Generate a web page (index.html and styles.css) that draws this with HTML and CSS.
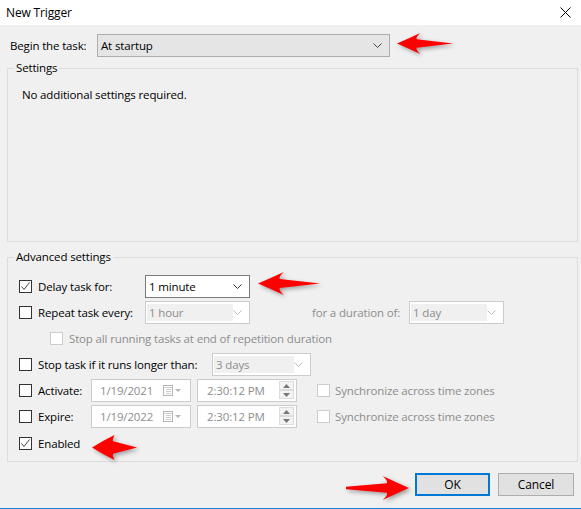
FILE: index.html
```html
<!DOCTYPE html>
<html lang="en">
<head>
    <meta charset="UTF-8">
    <title>New Trigger</title>
    <link rel="stylesheet" href="styles.css">
</head>
<body>

<div class="dialog">
    <div class="titlebar">
        <span class="title">New Trigger</span>
        <svg class="close" width="11" height="11" viewBox="0 0 11 11"><path d="M0.5 0.5L10.5 10.5M10.5 0.5L0.5 10.5" stroke="#000" stroke-width="1"/></svg>
    </div>

    <div class="content">
        <div class="begin-row">
            <span class="begin-label">Begin the task:</span>
            <div class="combo combo-begin">
                <span>At startup</span>
                <svg width="9" height="5" viewBox="0 0 9 5"><path d="M0.5 0.5L4.5 4.5L8.5 0.5" fill="none" stroke="#444"/></svg>
            </div>
        </div>

        <!-- Settings -->
        <fieldset class="group group-settings">
            <legend>Settings</legend>
            <p class="note">No additional settings required.</p>
        </fieldset>

        <!-- Advanced settings -->
        <fieldset class="group group-advanced">
            <legend>Advanced settings</legend>

            <div class="opt-row">
                <span class="check checked"><svg width="11" height="11" viewBox="0 0 11 11"><path d="M1.5 5.5L4 8.5L9.5 1.5" fill="none" stroke="#444" stroke-width="1"/></svg></span>
                <span class="opt-label w-delay">Delay task for:</span>
                <div class="combo combo-active w-105">
                    <span>1 minute</span>
                    <svg width="9" height="5" viewBox="0 0 9 5"><path d="M0.5 0.5L4.5 4.5L8.5 0.5" fill="none" stroke="#333"/></svg>
                </div>
            </div>

            <div class="opt-row">
                <span class="check"></span>
                <span class="opt-label w-delay">Repeat task every:</span>
                <div class="combo combo-off w-105">
                    <span class="combo-text w-84">1 hour</span>
                    <svg width="9" height="5" viewBox="0 0 9 5"><path d="M0.5 0.5L4.5 4.5L8.5 0.5" fill="none" stroke="#bbb"/></svg>
                </div>
                <span class="opt-label off duration-label">for a duration of:</span>
                <div class="combo combo-off w-95">
                    <span class="combo-text w-72">1 day</span>
                    <svg width="9" height="5" viewBox="0 0 9 5"><path d="M0.5 0.5L4.5 4.5L8.5 0.5" fill="none" stroke="#bbb"/></svg>
                </div>
            </div>

            <div class="opt-row">
                <span class="check check-off sub"></span>
                <span class="opt-label off">Stop all running tasks at end of repetition duration</span>
            </div>

            <div class="opt-row">
                <span class="check"></span>
                <span class="opt-label w-stop">Stop task if it runs longer than:</span>
                <div class="combo combo-off w-99">
                    <span class="combo-text w-78">3 days</span>
                    <svg width="9" height="5" viewBox="0 0 9 5"><path d="M0.5 0.5L4.5 4.5L8.5 0.5" fill="none" stroke="#bbb"/></svg>
                </div>
            </div>

            <div class="opt-row">
                <span class="check"></span>
                <span class="opt-label w-date">Activate:</span>
                <div class="field date-field">
                    <span>1/19/2021</span>
                    <span class="cal">
                        <svg width="19" height="11" viewBox="0 0 19 11"><rect x="0.5" y="0.5" width="9" height="10" fill="#fff" stroke="#b5b5b5"/><path d="M0.5 2.5H9.5M3 4.5H8M3 6.5H8M3 8.5H8" stroke="#cfcfcf"/><path d="M12 4H18L15 7Z" fill="#b5b5b5"/></svg>
                    </span>
                </div>
                <div class="field time-field">
                    <span>2:30:12 PM</span>
                    <span class="spin">
                        <span class="spin-btn"><svg width="7" height="4" viewBox="0 0 7 4"><path d="M0 4H7L3.5 0Z" fill="#777"/></svg></span>
                        <span class="spin-btn"><svg width="7" height="4" viewBox="0 0 7 4"><path d="M0 0H7L3.5 4Z" fill="#777"/></svg></span>
                    </span>
                </div>
                <span class="check check-off sync"></span>
                <span class="opt-label off">Synchronize across time zones</span>
            </div>

            <div class="opt-row">
                <span class="check"></span>
                <span class="opt-label w-date">Expire:</span>
                <div class="field date-field">
                    <span>1/19/2022</span>
                    <span class="cal">
                        <svg width="19" height="11" viewBox="0 0 19 11"><rect x="0.5" y="0.5" width="9" height="10" fill="#fff" stroke="#b5b5b5"/><path d="M0.5 2.5H9.5M3 4.5H8M3 6.5H8M3 8.5H8" stroke="#cfcfcf"/><path d="M12 4H18L15 7Z" fill="#b5b5b5"/></svg>
                    </span>
                </div>
                <div class="field time-field">
                    <span>2:30:12 PM</span>
                    <span class="spin">
                        <span class="spin-btn"><svg width="7" height="4" viewBox="0 0 7 4"><path d="M0 4H7L3.5 0Z" fill="#777"/></svg></span>
                        <span class="spin-btn"><svg width="7" height="4" viewBox="0 0 7 4"><path d="M0 0H7L3.5 4Z" fill="#777"/></svg></span>
                    </span>
                </div>
                <span class="check check-off sync"></span>
                <span class="opt-label off">Synchronize across time zones</span>
            </div>

            <div class="opt-row row-enabled">
                <span class="check checked"><svg width="11" height="11" viewBox="0 0 11 11"><path d="M1.5 5.5L4 8.5L9.5 1.5" fill="none" stroke="#444" stroke-width="1"/></svg></span>
                <span class="opt-label">Enabled</span>
            </div>
        </fieldset>

        <div class="buttons">
            <button class="btn btn-default">OK</button>
            <button class="btn">Cancel</button>
        </div>
    </div>

    <!-- red arrows drawn on top of the screenshot -->
    <svg class="arrow arrow-begin" width="56" height="21" viewBox="0 0 60 20" preserveAspectRatio="none"><path d="M0 10Q13 5 25 0Q20 4 21 6L60 10L21 14Q20 16 25 20Q13 15 0 10Z" fill="#f00"/></svg>
    <svg class="arrow arrow-delay" width="62" height="23" viewBox="0 0 60 20" preserveAspectRatio="none"><path d="M0 10Q13 5 25 0Q20 4 21 6L60 10L21 14Q20 16 25 20Q13 15 0 10Z" fill="#f00"/></svg>
    <svg class="arrow arrow-enabled" width="45" height="25" viewBox="0 0 60 20" preserveAspectRatio="none"><path d="M0 10Q13 5 30 0Q27 4 28 5L60 10L28 15Q27 16 30 20Q13 15 0 10Z" fill="#f00"/></svg>
    <svg class="arrow arrow-ok" width="63" height="24" viewBox="0 0 60 20" preserveAspectRatio="none"><path d="M60 10Q47 5 35 0Q40 4 39 6L0 9L0 11L39 14Q40 16 35 20Q47 15 60 10Z" fill="#f00"/></svg>
</div>

</body>
</html>
```

FILE: styles.css
```css
/* dialog frame */
body {
    margin: 0;
    font-family: "Segoe UI", "Open Sans", sans-serif;
    font-size: 11.5px;
    letter-spacing: -0.15px;
    color: #000;
    background-color: #f0f0f0;
}

.dialog {
    position: relative;
    width: 581px;
    height: 508px;
    border-bottom: 1px solid #1883d7;
    background-color: #f0f0f0;
    overflow: hidden;
}

.titlebar {
    height: 25px;
    background-color: #fff;
    display: flex;
    align-items: center;
    justify-content: space-between;
    padding: 0 10px 0 6px;
}

.title {
    font-size: 12px;
}

.content {
    padding: 9px 4px 0 7px;
}

/* begin the task */
.begin-row {
    display: flex;
    align-items: center;
    height: 23px;
    padding-left: 3px;
}

.begin-label {
    width: 87px;
}

/* combo boxes */
.combo {
    box-sizing: border-box;
    height: 23px;
    display: flex;
    align-items: center;
    justify-content: space-between;
    padding: 0 7px 0 3px;
    border: 1px solid #adadad;
    background-color: #fff;
}

.combo-begin {
    width: 293px;
    background-color: #e5e5e5;
}

.combo-active {
    border-color: #7a7a7a;
}

.combo-off {
    border-color: #cccccc;
    color: #8d8d8d;
    padding: 2px 7px 2px 1px;
    align-items: stretch;
}

.combo-off svg {
    align-self: center;
}

.combo-text {
    display: flex;
    align-items: center;
    padding-left: 2px;
    background-color: #f0f0f0;
}

.w-105 { width: 105px; }
.w-95 { width: 95px; }
.w-99 { width: 99px; }
.w-84 { width: 84px; }
.w-72 { width: 74px; }
.w-78 { width: 78px; }

/* group boxes */
.group {
    box-sizing: border-box;
    width: 571px;
    margin: 0;
    padding: 0;
    border: 1px solid #dcdcdc;
    min-width: 0;
}

.group legend {
    padding: 0 2px;
    margin-left: 6px;
    line-height: 16px;
}

.group-settings {
    margin-top: 3px;
    height: 182px;
}

.note {
    margin: 11px 0 0 14px;
}

.group-advanced {
    margin-top: 7px;
    height: 213px;
    padding-top: 8px;
}

/* option rows */
.opt-row {
    display: flex;
    align-items: center;
    height: 26px;
    padding-left: 11px;
}

.row-enabled {
    margin-top: 1px;
}

.check {
    box-sizing: border-box;
    width: 13px;
    height: 13px;
    flex: none;
    border: 1px solid #333;
    background-color: #fff;
    display: flex;
    align-items: center;
    justify-content: center;
    margin-right: 6px;
}

.check-off {
    border-color: #cccccc;
}

.check.sub {
    margin-left: 31px;
}

.check.sync {
    margin-left: 20px;
    margin-right: 5px;
}

.opt-label {
    white-space: nowrap;
}

.off {
    color: #8d8d8d;
}

.w-delay { width: 107px; }
.w-stop { width: 174px; }
.w-date { width: 53px; }

.duration-label {
    margin-left: 62px;
    width: 97px;
}

/* date and time pickers */
.field {
    box-sizing: border-box;
    height: 23px;
    display: flex;
    align-items: center;
    justify-content: space-between;
    border: 1px solid #cccccc;
    background-color: #fff;
    color: #8d8d8d;
}

.date-field {
    width: 100px;
    padding: 0 8px 0 8px;
}

.cal {
    display: flex;
}

.time-field {
    width: 100px;
    margin-left: 6px;
    padding: 0 2px 0 9px;
}

.spin {
    display: flex;
    flex-direction: column;
}

.spin-btn {
    box-sizing: border-box;
    width: 15px;
    height: 9px;
    border: 1px solid #dcdcdc;
    background-color: #f3f3f3;
    display: flex;
    align-items: center;
    justify-content: center;
}

/* buttons */
.buttons {
    display: flex;
    justify-content: flex-end;
    gap: 8px;
    margin-top: 11px;
    padding-right: 3px;
}

.btn {
    box-sizing: border-box;
    width: 76px;
    height: 23px;
    font-family: inherit;
    font-size: 12px;
    letter-spacing: -0.1px;
    color: #000;
    background-color: #e1e1e1;
    border: 1px solid #adadad;
    padding: 0;
}

.btn-default {
    width: 75px;
    border: 2px solid #0078d7;
}

/* annotation arrows */
.arrow {
    position: absolute;
    filter: drop-shadow(2px 2px 2px rgba(0, 0, 0, 0.35));
}

.arrow-begin { left: 397px; top: 33px; }
.arrow-delay { left: 258px; top: 272px; }
.arrow-enabled { left: 92px; top: 435px; }
.arrow-ok { left: 346px; top: 476px; }
```
